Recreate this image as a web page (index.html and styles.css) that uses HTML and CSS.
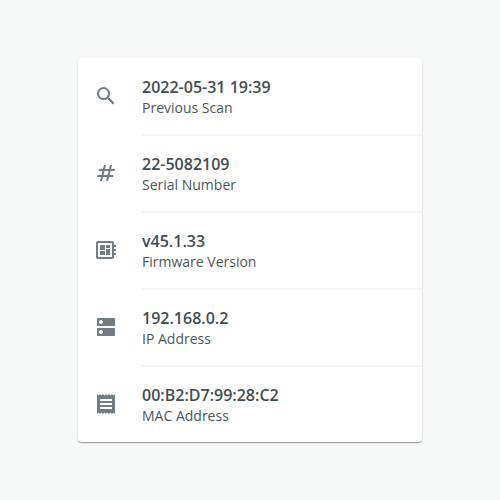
FILE: index.html
```html
<!DOCTYPE html>
<html lang="en">
<head>
<meta charset="utf-8">
<title>Device details</title>
<link rel="stylesheet" href="styles.css">
</head>
<body>
<ul class="card">
  <li class="row">
    <svg class="icon" viewBox="0 0 24 24"><path d="M15.5 14h-.79l-.28-.27A6.471 6.471 0 0 0 16 9.5 6.5 6.5 0 1 0 9.5 16c1.61 0 3.09-.59 4.23-1.57l.27.28v.79l5 4.99L20.49 19l-4.99-5zm-6 0C7.01 14 5 11.99 5 9.5S7.01 5 9.5 5 14 7.01 14 9.5 11.99 14 9.5 14z"/></svg>
    <div class="text"><div class="value">2022-05-31 19:39</div><div class="label">Previous Scan</div></div>
  </li>
  <li class="row">
    <svg class="icon" viewBox="0 0 24 24"><path d="M20.500 10L21 8h-4l1-4h-2l-1 4h-4l1-4h-2L9 8H5l-.5 2h4l-1 4h-4L3 16h4l-1 4h2l1-4h4l-1 4h2l1-4h4l.5-2h-4l1-4h4zm-7 4h-4l1-4h4l-1 4z"/></svg>
    <div class="text"><div class="value">22-5082109</div><div class="label">Serial Number</div></div>
  </li>
  <li class="row">
    <svg class="icon" viewBox="0 0 24 24"><path d="M22 9V7h-2V5c0-1.100-.9-2-2-2H4c-1.100 0-2 .9-2 2v14c0 1.100.9 2 2 2h14c1.100 0 2-.9 2-2v-2h2v-2h-2v-2h2v-2h-2V9h2zm-4 10H4V5h14v14zM6 13h5v4H6zm6-6h4v3h-4zM6 7h5v5H6zm6 4h4v6h-4z"/></svg>
    <div class="text"><div class="value">v45.1.33</div><div class="label">Firmware Version</div></div>
  </li>
  <li class="row">
    <svg class="icon" viewBox="0 0 24 24"><path d="M20 13H4c-.55 0-1 .45-1 1v6c0 .55.45 1 1 1h16c.55 0 1-.45 1-1v-6c0-.55-.45-1-1-1zM7 19c-1.100 0-2-.9-2-2s.9-2 2-2 2 .9 2 2-.9 2-2 2zM20 3H4c-.55 0-1 .45-1 1v6c0 .55.45 1 1 1h16c.55 0 1-.45 1-1V4c0-.55-.45-1-1-1zM7 9c-1.100 0-2-.9-2-2s.9-2 2-2 2 .9 2 2-.9 2-2 2z"/></svg>
    <div class="text"><div class="value">192.168.0.2</div><div class="label">IP Address</div></div>
  </li>
  <li class="row">
    <svg class="icon" viewBox="0 0 24 24"><path d="M18 17H6v-2h12v2zm0-4H6v-2h12v2zm0-4H6V7h12v2zM3 22l1.500-1.500L6 22l1.500-1.500L9 22l1.500-1.500L12 22l1.500-1.500L15 22l1.500-1.500L18 22l1.500-1.500L21 22V2l-1.500 1.500L18 2l-1.500 1.500L15 2l-1.500 1.500L12 2l-1.500 1.500L9 2 7.500 3.500 6 2 4.500 3.500 3 2v20z"/></svg>
    <div class="text"><div class="value">00:B2:D7:99:28:C2</div><div class="label">MAC Address</div></div>
  </li>
</ul>
</body>
</html>
```
FILE: styles.css
```css
* { box-sizing: border-box; }
body {
  margin: 0;
  height: 100vh;
  display: flex;
  justify-content: center;
  align-items: center;
  background: #f6f9f8;
  font-family: "Open Sans", sans-serif;
}
.card {
  width: 344px;
  height: 384px;
  margin: 0;
  padding: 0;
  list-style: none;
  background: #fff;
  border-radius: 4px;
  box-shadow: 0 2px 1px -1px rgba(0, 0, 0, .2), 0 1px 1px rgba(0, 0, 0, .14), 0 1px 3px rgba(0, 0, 0, .12);
}
.row { display: flex; align-items: flex-start; height: 77px; padding-left: 16px; }
.icon { width: 24px; height: 24px; margin: 26px 24px 0 0; fill: #6f7d84; flex: none; }
.text { flex: 1; height: 78px; padding-top: 18px; border-bottom: 2px solid #f3f4f4; }
.row:last-child .text { height: 76px; border-bottom: 0; }
.value { font-size: 16px; line-height: 22px; font-weight: 600; color: #3f4e53; }
.label { font-size: 14px; line-height: 19px; color: #4a585d; }
```
